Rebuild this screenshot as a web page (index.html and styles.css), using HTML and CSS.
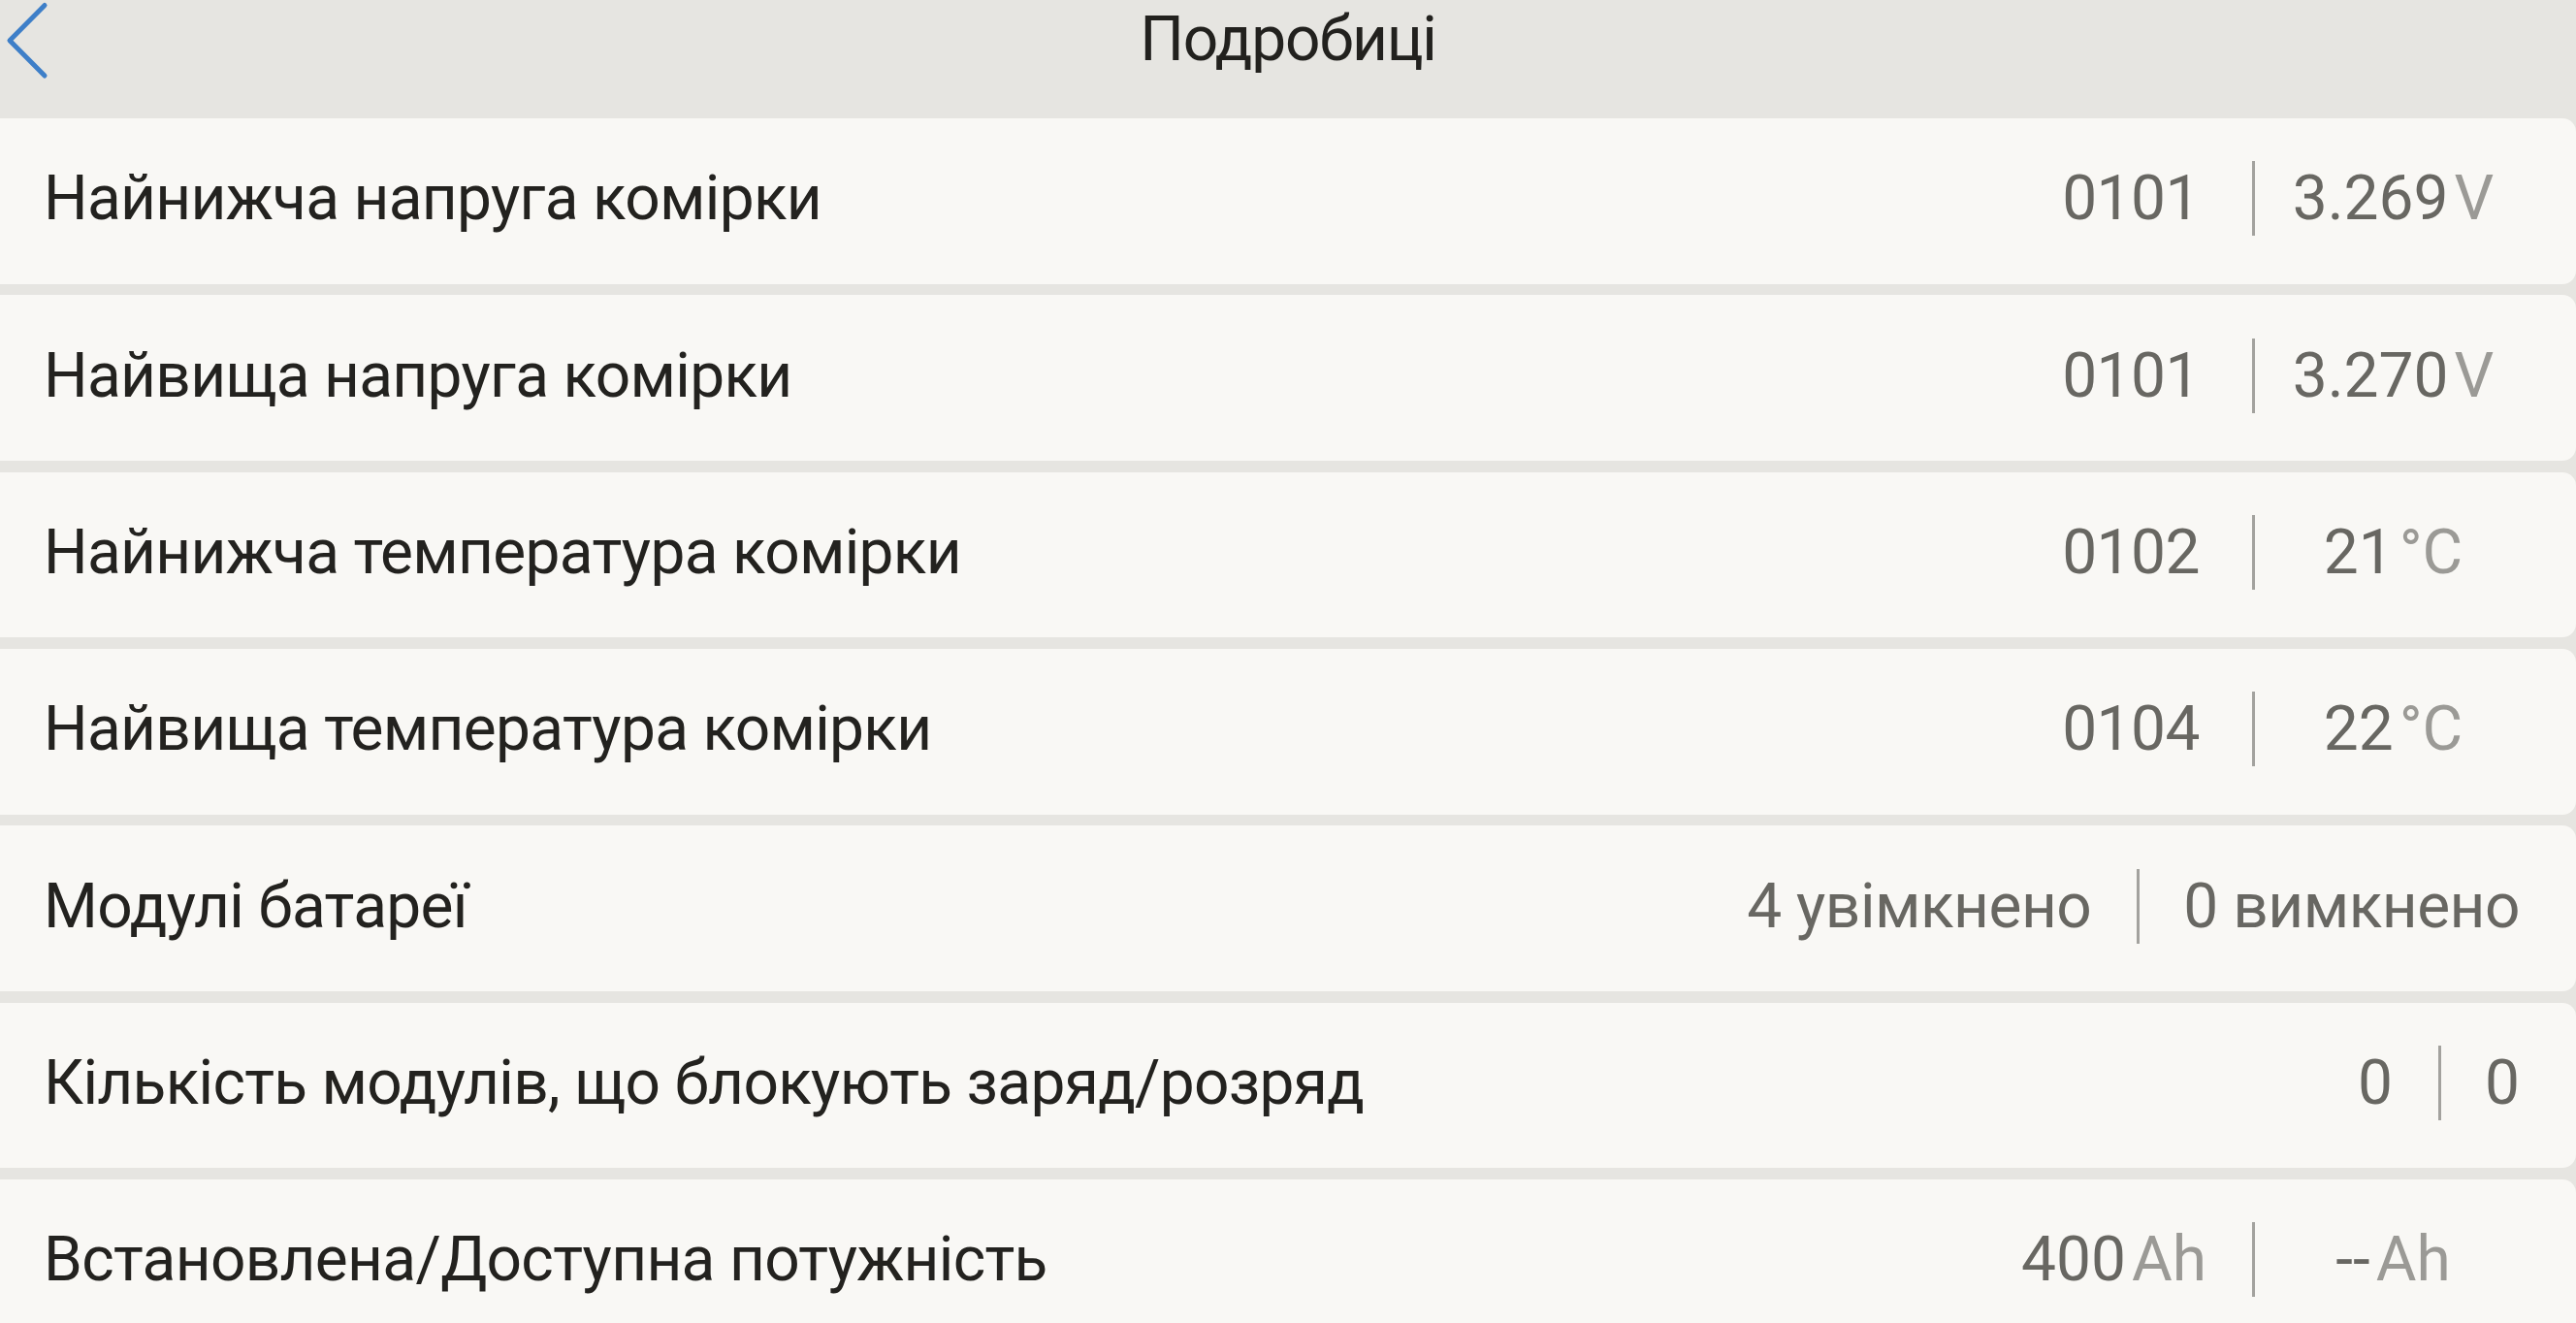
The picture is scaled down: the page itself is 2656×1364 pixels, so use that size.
FILE: index.html
```html
<!DOCTYPE html>
<html lang="uk">
<head>
<meta charset="utf-8">
<title>Подробиці</title>
<link rel="stylesheet" href="styles.css">
</head>
<body>
<div class="page">
  <header class="topbar">
    <div class="back">
      <svg class="back-icon" width="56" height="82" viewBox="0 0 56 82">
        <polyline points="46,5.5 10,41.7 46,78" fill="none" stroke="#3e7fc8" stroke-width="5" stroke-linecap="round" stroke-linejoin="round"/>
      </svg>
    </div>
    <h1 class="title">Подробиці</h1>
    <div class="spacer"></div>
  </header>

  <main class="list">
    <div class="card">
      <div class="label">Найнижча напруга комірки</div>
      <div class="values">
        <span class="v1 code">0101</span>
        <span class="sep"></span>
        <span class="v2 fixed">3.269<span class="unit">V</span></span>
      </div>
    </div>
    <div class="card">
      <div class="label">Найвища напруга комірки</div>
      <div class="values">
        <span class="v1 code">0101</span>
        <span class="sep"></span>
        <span class="v2 fixed">3.270<span class="unit">V</span></span>
      </div>
    </div>
    <div class="card">
      <div class="label">Найнижча температура комірки</div>
      <div class="values">
        <span class="v1 code">0102</span>
        <span class="sep"></span>
        <span class="v2 fixed">21<span class="unit">°C</span></span>
      </div>
    </div>
    <div class="card">
      <div class="label">Найвища температура комірки</div>
      <div class="values">
        <span class="v1 code">0104</span>
        <span class="sep"></span>
        <span class="v2 fixed">22<span class="unit">°C</span></span>
      </div>
    </div>
    <div class="card">
      <div class="label">Модулі батареї</div>
      <div class="values">
        <span class="v1 txt">4 увімкнено</span>
        <span class="sep"></span>
        <span class="v2 txt">0 вимкнено</span>
      </div>
    </div>
    <div class="card">
      <div class="label">Кількість модулів, що блокують заряд/розряд</div>
      <div class="values">
        <span class="v1">0</span>
        <span class="sep"></span>
        <span class="v2">0</span>
      </div>
    </div>
    <div class="card">
      <div class="label">Встановлена/Доступна потужність</div>
      <div class="values">
        <span class="v1">400<span class="unit">Ah</span></span>
        <span class="sep"></span>
        <span class="v2 fixed"><span class="dash">--</span><span class="unit">Ah</span></span>
      </div>
    </div>
  </main>
</div>
</body>
</html>
```

FILE: styles.css
```css
html, body {
  margin: 0;
  padding: 0;
}

body {
  background: #e6e5e1;
  font-family: Roboto, "Noto Sans", "Liberation Sans", sans-serif;
  overflow: hidden;
  height: 1364px;
}

.page {
  display: flex;
  flex-direction: column;
}

.topbar {
  height: 82px;
  margin-bottom: 40px;
  display: grid;
  grid-template-columns: 1fr auto 1fr;
  align-items: center;
}

.back {
  display: flex;
  align-items: center;
}

.back-icon {
  display: block;
}

.title {
  margin: 0;
  font-size: 64px;
  font-weight: 400;
  color: #22211e;
  line-height: 82px;
  letter-spacing: -1.2px;
}

.list {
  display: flex;
  flex-direction: column;
  gap: 11.67px;
}

.card {
  height: 170.67px;
  box-sizing: border-box;
  background: #f9f8f5;
  border-radius: 0 14px 14px 0;
  display: flex;
  align-items: center;
  justify-content: space-between;
  padding: 0 58px 5px 45px;
  font-size: 64px;
  flex-shrink: 0;
}

.label {
  color: #23221f;
  white-space: nowrap;
  letter-spacing: -0.7px;
}

.values {
  display: flex;
  align-items: center;
  color: #686762;
  white-space: nowrap;
}

.txt {
  letter-spacing: -0.5px;
}

.v1 {
  padding-right: 47px;
}

.v1.code {
  padding-right: 54px;
  letter-spacing: -0.5px;
}

.sep {
  width: 3px;
  height: 77px;
  background: #a3a29e;
  flex-shrink: 0;
}

.v2 {
  padding-left: 45px;
}

.v2.fixed {
  padding-left: 0;
  margin-left: 12px;
  width: 261px;
  text-align: center;
}

.unit {
  color: #9b9a96;
  margin-left: 6px;
}

.dash {
  letter-spacing: 0;
}
```
